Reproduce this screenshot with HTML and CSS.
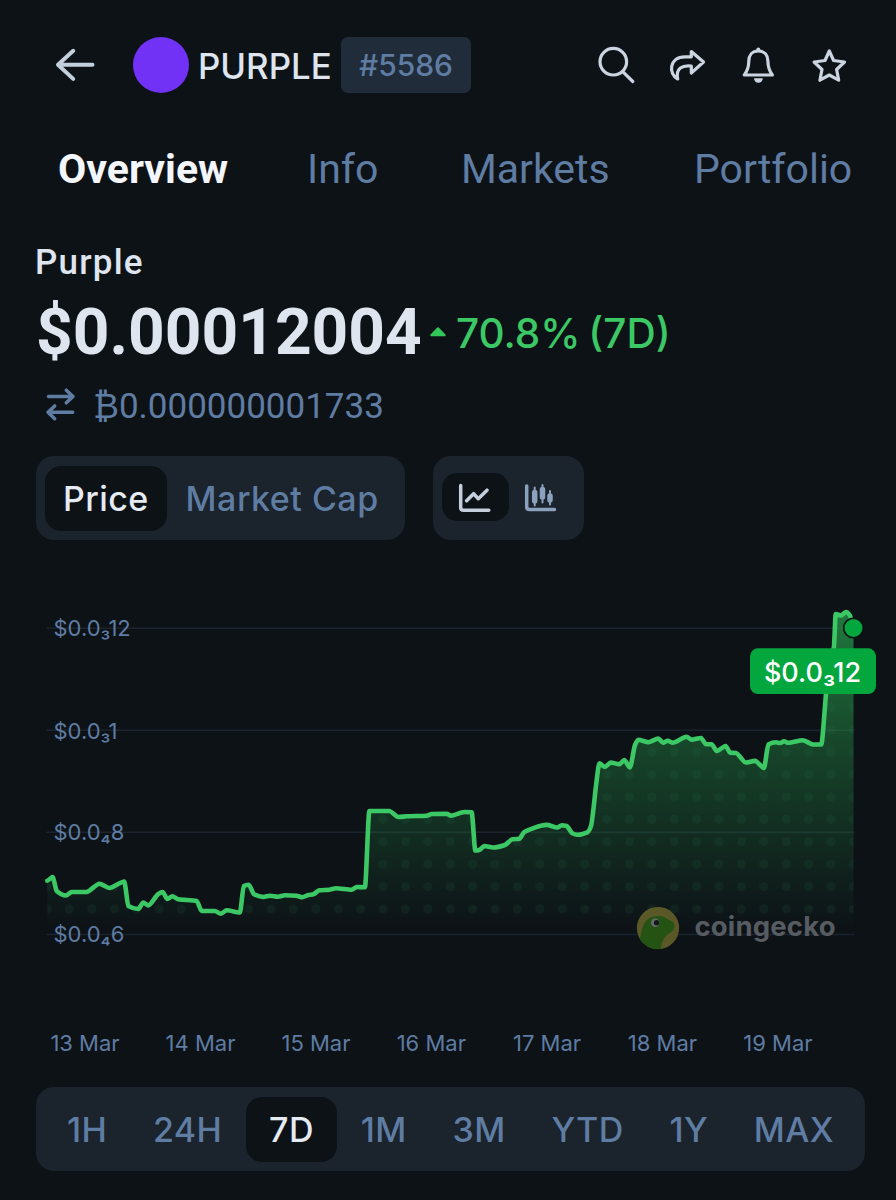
FILE: index.html
```html
<!DOCTYPE html>
<html lang="en">

<head>
  <meta charset="UTF-8" />
  <meta name="viewport" content="width=device-width, initial-scale=1.0" />
  <title>Purple</title>
  <link rel="stylesheet" href="styles.css">
</head>

<body>
  <header class="header">
    <svg class="back" width="40" height="40" viewBox="0 0 40 40">
      <path d="M37.5 19.7H3M18.2 5.8L3 19.7l15.2 14.2" />
    </svg>
    <span class="coin-logo"></span>
    <span class="symbol">PURPLE</span>
    <span class="rank">#5586</span>
    <div class="actions">
      <svg width="40" height="40" viewBox="0 0 40 40">
        <circle cx="17.3" cy="16.7" r="13.3" />
        <path d="M26.7 26.7L36.8 36.5" />
      </svg>
      <svg width="40" height="40" viewBox="0 0 40 40">
        <path d="M24.3 6.500L36.500 17 24.300 28V21C15.500 20 8.500 23 10.700 34 1.500 29.500 1.500 11.800 18 11.800H24.300Z" />
      </svg>
      <svg width="40" height="40" viewBox="0 0 40 40">
        <path d="M20.300 6C14 6 10.800 10.500 10.800 16C10.800 23 9 26.500 6.300 30H34.400C31.700 26.500 29.900 23 29.900 16C29.900 10.500 26.600 6 20.300 6Z" />
        <path class="solid" d="M18.300 6V4.500a2 2 0 0 1 4 0V6ZM16 33.300h8.800a4.400 4.400 0 0 1-8.800 0Z" />
      </svg>
      <svg width="40" height="40" viewBox="0 0 40 40">
        <path d="M20.300 6L24.600 15.500 35.500 17 27.600 24.500 29.700 35.200 20.300 30 10.900 35.200 13 24.500 5.100 17 16 15.500Z" />
      </svg>
    </div>
  </header>

  <nav class="tabs">
    <a class="tab active">Overview</a>
    <a class="tab info">Info</a>
    <a class="tab markets">Markets</a>
    <a class="tab portfolio">Portfolio</a>
  </nav>

  <section class="summary">
    <div class="coin-name">Purple</div>
    <div class="price-row">
      <span class="price">$0.00012004</span>
      <svg class="up" width="18" height="12" viewBox="0 0 18 12">
        <path d="M9 2.200L15.700 9.300H2.300Z" />
      </svg>
      <span class="change">70.8% (7D)</span>
    </div>
    <div class="btc-row">
      <svg width="32" height="36" viewBox="0 0 32 36">
        <path d="M4.500 9.500H29M22.300 3.200l6.700 6.300-6.700 6.300M28.700 25.200H4M10.700 18.900L4 25.200l6.700 6.500" />
      </svg>
      <span class="btc">₿0.000000001733</span>
    </div>
  </section>

  <div class="controls">
    <div class="segment">
      <span class="option selected">Price</span>
      <span class="option cap">Market Cap</span>
    </div>
    <div class="segment types">
      <span class="type selected">
        <svg width="40" height="34" viewBox="0 0 40 34">
          <path d="M5.700 5.500V27.500Q5.700 30.200 8.400 30.200H33.800M11.600 20.800L18.600 13.700 23.300 18.700 32 10.200" />
        </svg>
      </span>
      <span class="type candle">
        <svg width="40" height="34" viewBox="0 0 40 34">
          <path d="M4.700 6V26.700Q4.700 29.500 7.500 29.500H32.500" />
          <path class="wick" d="M12.700 7.500v18M20.500 5v17.500M28 11v13.500" />
          <path class="body" d="M12.700 12.500v8.500M20.500 9.500v7.500M28 16v4" />
        </svg>
      </span>
    </div>
  </div>

  <svg class="chart" width="896" height="500" viewBox="0 570 896 500">
    <defs>
      <linearGradient id="fade" gradientUnits="userSpaceOnUse" x1="0" y1="610" x2="0" y2="928">
        <stop offset="0" stop-color="#2fc659" stop-opacity=".58" />
        <stop offset=".45" stop-color="#2fc659" stop-opacity=".27" />
        <stop offset=".8" stop-color="#2fc659" stop-opacity=".1" />
        <stop offset="1" stop-color="#2fc659" stop-opacity="0" />
      </linearGradient>
      <pattern id="dots" patternUnits="userSpaceOnUse" x="58.200" y="897.800" width="22.400" height="22.400">
        <circle cx="11.200" cy="11.200" r="4.500" fill="#2b8a55" fill-opacity=".1" />
      </pattern>
      <clipPath id="plot">
        <rect x="47" y="600" width="807" height="320" />
      </clipPath>
      <clipPath id="logo-clip">
        <circle cx="658" cy="928" r="21.300" />
      </clipPath>
    </defs>

    <path class="grid" d="M47 628.300H854M47 730.300H854M47 832.300H854M47 934.400H854" />
    <path id="area" fill="url(#fade)" />
    <path id="area-dots" fill="url(#dots)" clip-path="url(#plot)" />
    <path id="line" class="line" />

    <g class="y-labels">
      <text x="53.500" y="636">$0.0₃12</text>
      <text x="53.500" y="738.500">$0.0₃1</text>
      <text x="53.500" y="840.300">$0.0₄8</text>
      <text x="53.500" y="942.300">$0.0₄6</text>
    </g>

    <g clip-path="url(#logo-clip)">
      <circle cx="658" cy="928" r="21.300" fill="#5b5828" />
      <path fill="#245314" d="M636 952L641 934C643 922 647 916.500 658 916C663 916 666 918 669 920C675 922 675 925 674 928C673 932 669 933 667 935C662 940 661 944 661 952Z" />
      <circle cx="655.300" cy="922.800" r="4.200" fill="#676b6b" />
      <circle cx="656.600" cy="922.800" r="2.700" fill="#10191b" />
    </g>
    <text class="brand" x="694.500" y="936" textLength="141">coingecko</text>

    <circle cx="853.500" cy="628" r="9.800" fill="#04a63e" stroke="#0d1217" stroke-width="1.600" />
    <rect x="750" y="648.300" width="126" height="45.700" rx="8" fill="#04a63e" />
    <text class="tip" x="812.500" y="682" text-anchor="middle">$0.0₃12</text>

    <g class="x-labels">
      <text x="85" y="1051">13 Mar</text>
      <text x="200.500" y="1051">14 Mar</text>
      <text x="316" y="1051">15 Mar</text>
      <text x="431.300" y="1051">16 Mar</text>
      <text x="547" y="1051">17 Mar</text>
      <text x="662.500" y="1051">18 Mar</text>
      <text x="778" y="1051">19 Mar</text>
    </g>
  </svg>

  <div class="segment periods">
    <span class="option">1H</span>
    <span class="option">24H</span>
    <span class="option selected">7D</span>
    <span class="option">1M</span>
    <span class="option">3M</span>
    <span class="option">YTD</span>
    <span class="option">1Y</span>
    <span class="option">MAX</span>
  </div>

  <script src="chart.js"></script>
</body>

</html>
```

FILE: styles.css
```css
body {
  margin: 0;
  width: 896px;
  height: 1200px;
  overflow: hidden;
  background-color: #0d1217;
  color: #dfe5ef;
  font-family: Inter, "Liberation Sans", sans-serif;
  display: flex;
  flex-direction: column;
}

svg {
  display: block;
  flex-shrink: 0;
  fill: none;
  stroke-linecap: round;
  stroke-linejoin: round;
}

.header {
  display: flex;
  align-items: center;
  height: 56px;
  padding: 37px 47px 0 55px;
}

.back {
  stroke: #c3cfdc;
  stroke-width: 4;
}

.coin-logo {
  width: 56px;
  height: 56px;
  margin-left: 38px;
  border-radius: 50%;
  background-color: #7132f5;
}

.symbol {
  width: 143px;
  margin-left: 9px;
  padding-top: 1px;
  box-sizing: border-box;
  font-size: 34.800px;
  font-weight: 500;
  white-space: nowrap;
}

.rank {
  width: 130px;
  height: 56px;
  border-radius: 7px;
  background-color: #212c3a;
  color: #5f7ca3;
  font-size: 30px;
  font-weight: 500;
  line-height: 56px;
  text-align: center;
}

.actions {
  display: flex;
  gap: 31px;
  margin-left: auto;
  stroke: #cbd5e1;
  stroke-width: 3.200;
}

.solid {
  fill: #cbd5e1;
  stroke: none;
}

.tabs {
  display: flex;
  height: 60px;
  margin-top: 46px;
  padding-left: 58px;
  font-family: Roboto, sans-serif;
  font-size: 41px;
  line-height: 60px;
  color: #5f7ca3;
}

.tab {
  white-space: nowrap;
}

.tab.active {
  width: 249px;
  color: #f3f6fb;
  font-weight: 700;
}

.tab.info {
  width: 154px;
}

.tab.markets {
  width: 233px;
}

.summary {
  font-family: Roboto, sans-serif;
  padding-left: 36px;
  margin-top: 41px;
}

.coin-name {
  height: 46px;
  line-height: 45px;
  font-size: 35px;
  font-weight: 500;
  letter-spacing: 1.200px;
  margin-left: -1px;
}

.price-row {
  display: flex;
  align-items: center;
  height: 92px;
}

.price {
  width: 393px;
  font-size: 64px;
  font-weight: 700;
}

.up {
  fill: #33c75a;
  stroke: #33c75a;
  stroke-width: 2;
}

.change {
  margin-left: 9px;
  padding-top: 2px;
  font-family: Inter, sans-serif;
  font-size: 40.500px;
  font-weight: 500;
  word-spacing: -3px;
  color: #3cc864;
  white-space: nowrap;
}

.btc-row {
  display: flex;
  align-items: center;
  height: 54px;
  padding-left: 8px;
  stroke: #5f7ca3;
  stroke-width: 3.500;
}

.btc {
  margin-left: 17px;
  padding-top: 2px;
  color: #5f7ca3;
  font-size: 35px;
}

.controls {
  display: flex;
  gap: 28px;
  margin: 24px 0 0 36px;
}

.segment {
  display: flex;
  align-items: center;
  height: 84px;
  padding: 0 9px;
  box-sizing: border-box;
  border-radius: 18px;
  background-color: #1b232c;
}

.controls .segment {
  width: 369px;
}

.option {
  height: 65px;
  padding: 0 18px;
  border-radius: 16px;
  color: #5f7ca3;
  font-size: 34px;
  font-weight: 500;
  letter-spacing: 0.400px;
  line-height: 66px;
  white-space: nowrap;
}

.option.selected {
  background-color: #0d1217;
  color: #e6ebf3;
}

.option.cap {
  padding-left: 19px;
  letter-spacing: 0.500px;
}

.controls .types {
  width: 151px;
}

.type {
  display: flex;
  justify-content: center;
  align-items: center;
  width: 67px;
  height: 48px;
  margin-bottom: 2px;
  border-radius: 15px;
  stroke: #c3cfdc;
  stroke-width: 3.500;
}

.type.selected {
  background-color: #0d1217;
}

.type.candle {
  stroke: #8ba1bd;
}

.wick {
  stroke-width: 2;
}

.body {
  stroke-width: 5.500;
}

.chart {
  margin-top: 30px;
}

.grid {
  stroke: #1b232c;
  stroke-width: 1.500;
}

.line {
  stroke: #3cc864;
  stroke-width: 4.600;
}

.y-labels,
.x-labels {
  fill: #5f7ca3;
  font-size: 22px;
}

.x-labels {
  text-anchor: middle;
}

.tip {
  fill: #fff;
  font-size: 27px;
  font-weight: 500;
}

.brand {
  fill: #565c61;
  font-size: 27.500px;
  font-weight: 700;
}

.periods {
  width: 829px;
  justify-content: space-between;
  margin: 17px 0 0 36px;
}

.periods .option {
  padding: 0 22px;
}

.periods .selected {
  padding: 0 23px;
}
```

FILE: chart.js
```js
// price points in chart coordinates
const points = [
  [47.3, 880.7], [52.7, 877], [56.7, 891], [66, 895.5], [71.7, 892], [86.7, 892], [99.3, 883.7],
  [109.3, 888], [124.3, 881.5], [128.3, 906], [138.3, 909], [143.3, 902.5], [148.3, 905.5],
  [158.3, 894], [162.7, 892], [167.3, 899], [172.3, 896.3], [178.3, 899.3], [196.7, 901],
  [201.7, 911], [215, 911], [220.7, 913.7], [226.7, 910.3], [240, 912.5], [243.7, 886],
  [248.7, 884.7], [254, 894.3], [263.3, 897], [270, 895.7], [278, 896.7], [285, 895.3],
  [296.7, 895.7], [302.3, 897.3], [308.3, 895], [313.3, 894.3], [319.3, 890.3], [329.3, 889.7],
  [336, 888.3], [351.7, 889.7], [356.7, 887], [365, 887.3], [369.3, 811], [389.3, 811],
  [398.3, 817], [406.7, 816.3], [426.7, 815.7], [431.7, 814], [446.7, 813.7], [451, 815.7],
  [464.3, 812], [471.7, 812.3], [475.3, 850.5], [479.3, 850], [484.3, 846], [493.3, 847.5],
  [505, 845], [512.3, 839.3], [519.3, 838.7], [524.3, 832], [546.7, 824.9], [557.3, 827.5],
  [561.7, 825.2], [566.7, 826], [572.3, 833.3], [577.3, 834.8], [587.3, 832.3], [591, 826],
  [596.7, 780], [599.3, 763.3], [605, 767], [610.7, 762.5], [619.3, 764.3], [624.3, 760],
  [630, 767.5], [635, 745], [638.3, 739.8], [648.3, 742.3], [658.3, 738.5], [663, 742.7],
  [667.7, 740.7], [672.7, 742.7], [686.7, 736.8], [691.7, 739.7], [701, 738], [706, 744.3],
  [711.7, 744.3], [716.7, 751], [725.7, 746], [730, 752.7], [736, 753], [745.7, 762.5],
  [755, 760.9], [764, 768], [768.3, 744.5], [776, 742.3], [780, 743], [784, 741.3], [788.3, 742.8],
  [802.7, 740.3], [813.3, 744.5], [821.3, 744.5], [826.7, 686.7], [834, 646], [835.7, 614],
  [841, 615.5], [846, 612], [850, 615.5], [853.5, 628]
];

// slope at a point, flat on peaks and dips so the curve never overshoots
function slope(i) {
  if (i === 0 || i === points.length - 1) return 0;
  const [x0, y0] = points[i - 1];
  const [x1, y1] = points[i];
  const [x2, y2] = points[i + 1];
  const a = (y1 - y0) / (x1 - x0);
  const b = (y2 - y1) / (x2 - x1);
  return a * b <= 0 ? 0 : 2 * a * b / (a + b);
}

let line = 'M' + points[0].join(' ');
for (let i = 1; i < points.length; i++) {
  const [x0, y0] = points[i - 1];
  const [x1, y1] = points[i];
  const dx = (x1 - x0) / 4;
  line += `C${x0 + dx} ${y0 + dx * slope(i - 1)} ${x1 - dx} ${y1 - dx * slope(i)} ${x1} ${y1}`;
}
const area = line + 'V934H47.3Z';

document.getElementById('line').setAttribute('d', line);
document.getElementById('area').setAttribute('d', area);
document.getElementById('area-dots').setAttribute('d', area);
```
